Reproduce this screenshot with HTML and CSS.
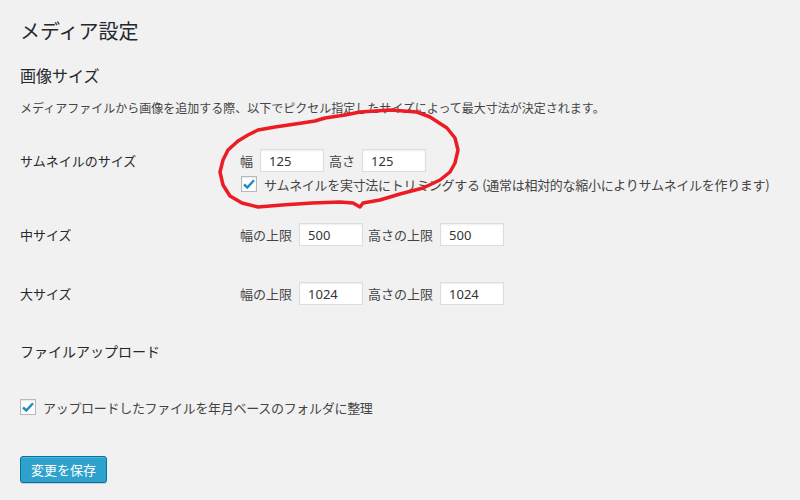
FILE: index.html
```html
<!DOCTYPE html>
<html lang="ja">

<head>
  <meta charset="UTF-8">
  <meta name="viewport" content="width=device-width, initial-scale=1.0">
  <title>メディア設定</title>
  <link rel="stylesheet" href="styles.css">
</head>

<body>
  <div class="wrap">
    <h1 class="title">メディア設定</h1>
    <h2 class="section">画像サイズ</h2>
    <p class="desc">メディアファイルから画像を追加する際、以下でピクセル指定したサイズによって最大寸法が決定されます。</p>

    <div class="row row-thumb">
      <div class="th">サムネイルのサイズ</div>
      <div class="td">
        <div class="fields">
          <label class="lbl">幅</label>
          <input class="inp" value="125" />
          <label class="lbl">高さ</label>
          <input class="inp" value="125" />
        </div>
        <div class="check-line">
          <span class="cb">
            <svg width="12" height="10" viewBox="0 0 12 10"><path d="M1 5.5 L4.3 8.5 L11 1.2" fill="none" stroke="#1e8cbe" stroke-width="2.4" /></svg>
          </span>
          <span>サムネイルを実寸法にトリミングする (通常は相対的な縮小によりサムネイルを作ります)</span>
        </div>
      </div>
    </div>

    <div class="row row-medium">
      <div class="th">中サイズ</div>
      <div class="td">
        <div class="fields">
          <label class="lbl">幅の上限</label>
          <input class="inp" value="500" />
          <label class="lbl">高さの上限</label>
          <input class="inp" value="500" />
        </div>
      </div>
    </div>

    <div class="row row-large">
      <div class="th">大サイズ</div>
      <div class="td">
        <div class="fields">
          <label class="lbl">幅の上限</label>
          <input class="inp" value="1024" />
          <label class="lbl">高さの上限</label>
          <input class="inp" value="1024" />
        </div>
      </div>
    </div>

    <h2 class="section small">ファイルアップロード</h2>

    <div class="check-line upload">
      <span class="cb">
        <svg width="12" height="10" viewBox="0 0 12 10"><path d="M1 5.5 L4.3 8.5 L11 1.2" fill="none" stroke="#1e8cbe" stroke-width="2.4" /></svg>
      </span>
      <span>アップロードしたファイルを年月ベースのフォルダに整理</span>
    </div>

    <div class="submit">
      <button class="btn">変更を保存</button>
    </div>
  </div>

  <!-- red marker drawn over the screenshot -->
  <svg class="marker" width="800" height="500" viewBox="0 0 800 500">
    <path d="M345 115 L360 112 L390 110 L417 112 L430 117 L447 128 L455 138 L458 150 L455 163 L450 172 L440 180 L423 188 L400 194 L380 200 L363 203 L360 207 L353 203 L340 202 L312 203 L282 205 L258 207 L242 203 L230 196 L223 185 L220 172 L223 160 L228 150 L238 141 L248 135 L258 130 L275 127 L302 123 L315 121 L325 118 L345 115"
      fill="none" stroke="#ed1c24" stroke-width="3.5" stroke-linejoin="round" stroke-linecap="round" />
  </svg>
</body>

</html>
```

FILE: styles.css
```css
html,
body {
  margin: 0;
  padding: 0;
  width: 100%;
  height: 100%;
  background-color: #f1f1f1;
}

body {
  position: relative;
  overflow: hidden;
  font-family: "Noto Sans CJK JP", "Noto Sans", sans-serif;
  font-size: 13px;
  color: #444;
}

.wrap {
  padding: 0 20px;
}

.title {
  margin: 17px 0 0 0;
  font-size: 20px;
  line-height: 28px;
  font-weight: normal;
  color: #23282d;
}

.section {
  margin: 18px 0 0 0;
  font-size: 16px;
  line-height: 24px;
  font-weight: normal;
  color: #23282d;
}

.section.small {
  margin-top: 36px;
  font-size: 14px;
  line-height: 20px;
}

.desc {
  margin: 12px 0 0 0;
  font-size: 12px;
  line-height: 18px;
  white-space: nowrap;
}

.row {
  display: flex;
  align-items: flex-start;
}

.row-thumb {
  margin-top: 32px;
}

.row-medium {
  margin-top: 31px;
}

.row-large {
  margin-top: 36px;
}

.th {
  flex: none;
  width: 220px;
  line-height: 23px;
  color: #23282d;
}

.td {
  flex: none;
  display: flex;
  flex-direction: column;
}

.fields {
  display: flex;
  align-items: center;
  height: 23px;
}

.lbl {
  margin-right: 7px;
  white-space: nowrap;
}

.inp {
  box-sizing: border-box;
  width: 64px;
  height: 23px;
  margin: 0 5px 0 0;
  padding: 0 8px;
  outline: none;
  background-color: #fff;
  border: 1px solid #ddd;
  box-shadow: inset 0 1px 2px rgba(0, 0, 0, .07);
  font-family: "Noto Sans", "Noto Sans CJK JP", sans-serif;
  font-size: 13px;
  color: #333;
}

.check-line {
  display: flex;
  align-items: center;
  height: 16px;
  margin-top: 4px;
  white-space: nowrap;
}

.check-line span:last-child {
  letter-spacing: -0.3px;
}

.check-line.upload {
  margin-top: 38px;
}

.cb {
  box-sizing: border-box;
  flex: none;
  display: flex;
  align-items: center;
  justify-content: center;
  width: 16px;
  height: 16px;
  margin-right: 7px;
  margin-left: 1px;
  background-color: #fff;
  border: 1px solid #b4b9be;
  box-shadow: inset 0 1px 2px rgba(0, 0, 0, .1);
}

.upload .cb {
  margin-left: 0;
}

.submit {
  margin-top: 41px;
}

.btn {
  box-sizing: border-box;
  height: 27px;
  padding: 0 10px;
  background-color: #2ea2cc;
  border: 1px solid #0074a2;
  border-radius: 3px;
  box-shadow: inset 0 1px 0 rgba(120, 200, 230, .5), 0 1px 0 rgba(0, 0, 0, .15);
  font-family: "Noto Sans CJK JP", sans-serif;
  font-size: 13px;
  line-height: 25px;
  color: #fff;
}

.marker {
  position: absolute;
  top: 0;
  left: 0;
  pointer-events: none;
}
```
